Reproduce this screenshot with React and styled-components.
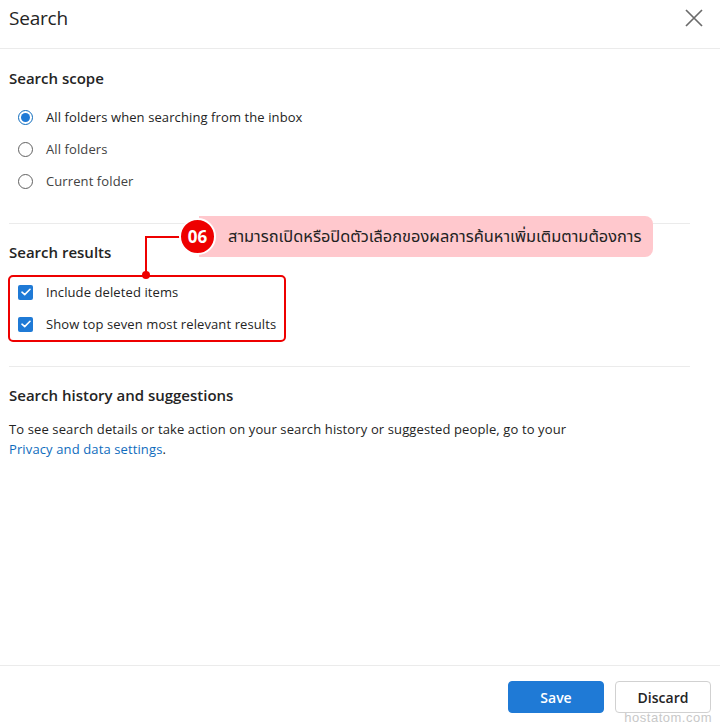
import React from 'react'
import styled, { createGlobalStyle } from 'styled-components'

const Global = createGlobalStyle`
  html, body { margin: 0; padding: 0; background: #fff; }
  body { font-family: 'Segoe UI', 'Open Sans', 'Noto Sans', sans-serif; color: #242424; }
  * { box-sizing: border-box; }
`

const Dialog = styled.div`
  position: relative;
  width: 720px;
  height: 725px;
  display: flex;
  flex-direction: column;
  overflow: hidden;
`

const Header = styled.header`
  height: 49px;
  flex: 0 0 49px;
  display: flex;
  align-items: center;
  justify-content: space-between;
  padding: 0 15px 13px 9px;
  border-bottom: 1px solid #ebebeb;
`

const Title = styled.h1`
  margin: 0;
  font-size: 19px;
  font-weight: 500;
  color: #242424;
  letter-spacing: -0.2px;
`

const Close = styled.button`
  border: 0;
  background: none;
  padding: 0;
  width: 22px;
  height: 22px;
  display: flex;
  align-items: center;
  justify-content: center;
  cursor: pointer;
`

const Body = styled.main`
  flex: 1;
  padding: 0 30px 0 9px;
`

const Section = styled.section`
  padding: ${p => p.$pad || '17px 0 24px'};
  border-bottom: ${p => (p.$last ? 'none' : '1px solid #ebebeb')};
`

const Heading = styled.h2`
  margin: 0 0 ${p => p.$gap || 12}px;
  font-size: 15px;
  font-weight: 600;
  line-height: 20px;
  color: #242424;
`

const OptionList = styled.div`
  display: flex;
  flex-direction: column;
  padding-left: 9px;
`

const Option = styled.label`
  height: 32px;
  display: flex;
  align-items: center;
  gap: 13px;
  font-size: 13px;
  letter-spacing: 0.1px;
  color: ${p => (p.$dark ? '#242424' : '#424242')};
`

const Radio = styled.span`
  width: 15px;
  height: 15px;
  border-radius: 50%;
  border: 1px solid ${p => (p.$on ? '#0f6cbd' : '#616161')};
  display: flex;
  align-items: center;
  justify-content: center;
  flex: 0 0 auto;
  &::after {
    content: '';
    width: 9px;
    height: 9px;
    border-radius: 50%;
    background: #1f7ad6;
    display: ${p => (p.$on ? 'block' : 'none')};
  }
`

const Check = styled.span`
  width: 15px;
  height: 15px;
  border-radius: 2px;
  background: #1f7ad6;
  display: flex;
  align-items: center;
  justify-content: center;
  flex: 0 0 auto;
`

const Text = styled.p`
  margin: 0;
  font-size: 13px;
  line-height: 20px;
  letter-spacing: 0.12px;
  color: #242424;
`

const Link = styled.a`
  color: #0f6cbd;
  text-decoration: none;
`

const Footer = styled.footer`
  flex: 0 0 60px;
  border-top: 1px solid #ebebeb;
  display: flex;
  justify-content: flex-end;
  align-items: flex-start;
  gap: 11px;
  padding: 15px 9px 0;
`

const Button = styled.button`
  width: 96px;
  height: 32px;
  border-radius: 4px;
  font-family: inherit;
  font-size: 14px;
  font-weight: 600;
  cursor: pointer;
  background: ${p => (p.$primary ? '#1f7ad6' : '#fff')};
  color: ${p => (p.$primary ? '#fff' : '#242424')};
  border: 1px solid ${p => (p.$primary ? '#1f7ad6' : '#d1d1d1')};
`

const Watermark = styled.span`
  position: absolute;
  right: 8px;
  bottom: 0;
  line-height: 14px;
  font-family: 'Liberation Sans', sans-serif;
  font-size: 13px;
  letter-spacing: 0.5px;
  color: #c8c8c8;
`

/* annotation overlay */
const Highlight = styled.div`
  position: absolute;
  left: 8px;
  top: 275px;
  width: 278px;
  height: 67px;
  border: 2px solid #ee0000;
  border-radius: 5px;
  pointer-events: none;
`

const Leader = styled.div`
  position: absolute;
  left: 145px;
  top: 236px;
  width: 40px;
  height: 39px;
  border-left: 2px solid #ee0000;
  border-top: 2px solid #ee0000;
  &::after {
    content: '';
    position: absolute;
    left: -5px;
    bottom: -4px;
    width: 8px;
    height: 8px;
    border-radius: 50%;
    background: #ee0000;
  }
`

const Callout = styled.div`
  position: absolute;
  left: 179px;
  top: 216px;
  height: 41px;
  width: 474px;
  display: flex;
  align-items: center;
`

const Pill = styled.div`
  position: absolute;
  left: 20px;
  right: 0;
  top: 0;
  bottom: 0;
  background: #ffc8cd;
  border-radius: 0 8px 8px 0;
`

const Badge = styled.div`
  position: relative;
  width: 37px;
  height: 37px;
  border-radius: 50%;
  background: #ee0000;
  border: 2px solid #fff;
  color: #fff;
  font-family: 'Open Sans', sans-serif;
  font-weight: 700;
  font-size: 17px;
  display: flex;
  align-items: center;
  justify-content: center;
  flex: 0 0 auto;
`

const CalloutText = styled.span`
  position: relative;
  margin-left: 12px;
  font-family: 'Noto Sans Thai', 'Noto Sans', 'DejaVu Sans', sans-serif;
  font-size: 16.4px;
  color: #222;
`

const CheckIcon = () => (
  <svg width="10" height="8" viewBox="0 0 10 8">
    <path d="M1 4.2 L3.7 6.6 L9 1.3" fill="none" stroke="#fff" strokeWidth="1.6" strokeLinecap="round" strokeLinejoin="round" />
  </svg>
)

const scope = [
  { label: 'All folders when searching from the inbox', on: true },
  { label: 'All folders' },
  { label: 'Current folder' }
]

const results = ['Include deleted items', 'Show top seven most relevant results']

export default function App() {
  return (
    <Dialog>
      <Global />
      <Header>
        <Title>Search</Title>
        <Close aria-label="Close">
          <svg width="18" height="18" viewBox="0 0 18 18">
            <path d="M1 1 L17 17 M17 1 L1 17" stroke="#6b6b6b" strokeWidth="1.7" />
          </svg>
        </Close>
      </Header>
      <Body>
        <Section $pad="19px 0 26px">
          <Heading $gap={13}>Search scope</Heading>
          <OptionList>
            {scope.map(o => (
              <Option key={o.label} $dark={o.on}>
                <Radio $on={o.on} />
                {o.label}
              </Option>
            ))}
          </OptionList>
        </Section>
        <Section $pad="18px 0 26px">
          <Heading $gap={14}>Search results</Heading>
          <OptionList>
            {results.map(r => (
              <Option key={r} $dark>
                <Check><CheckIcon /></Check>
                {r}
              </Option>
            ))}
          </OptionList>
        </Section>
        <Section $last $pad="18px 0 0">
          <Heading $gap={14}>Search history and suggestions</Heading>
          <Text>
            To see search details or take action on your search history or suggested people, go to your
            <br />
            <Link href="#">Privacy and data settings</Link>.
          </Text>
        </Section>
      </Body>
      <Footer>
        <Button $primary>Save</Button>
        <Button>Discard</Button>
      </Footer>
      <Watermark>hostatom.com</Watermark>

      <Highlight />
      <Leader />
      <Callout>
        <Pill />
        <Badge>06</Badge>
        <CalloutText>สามารถเปิดหรือปิดตัวเลือกของผลการค้นหาเพิ่มเติมตามต้องการ</CalloutText>
      </Callout>
    </Dialog>
  )
}
